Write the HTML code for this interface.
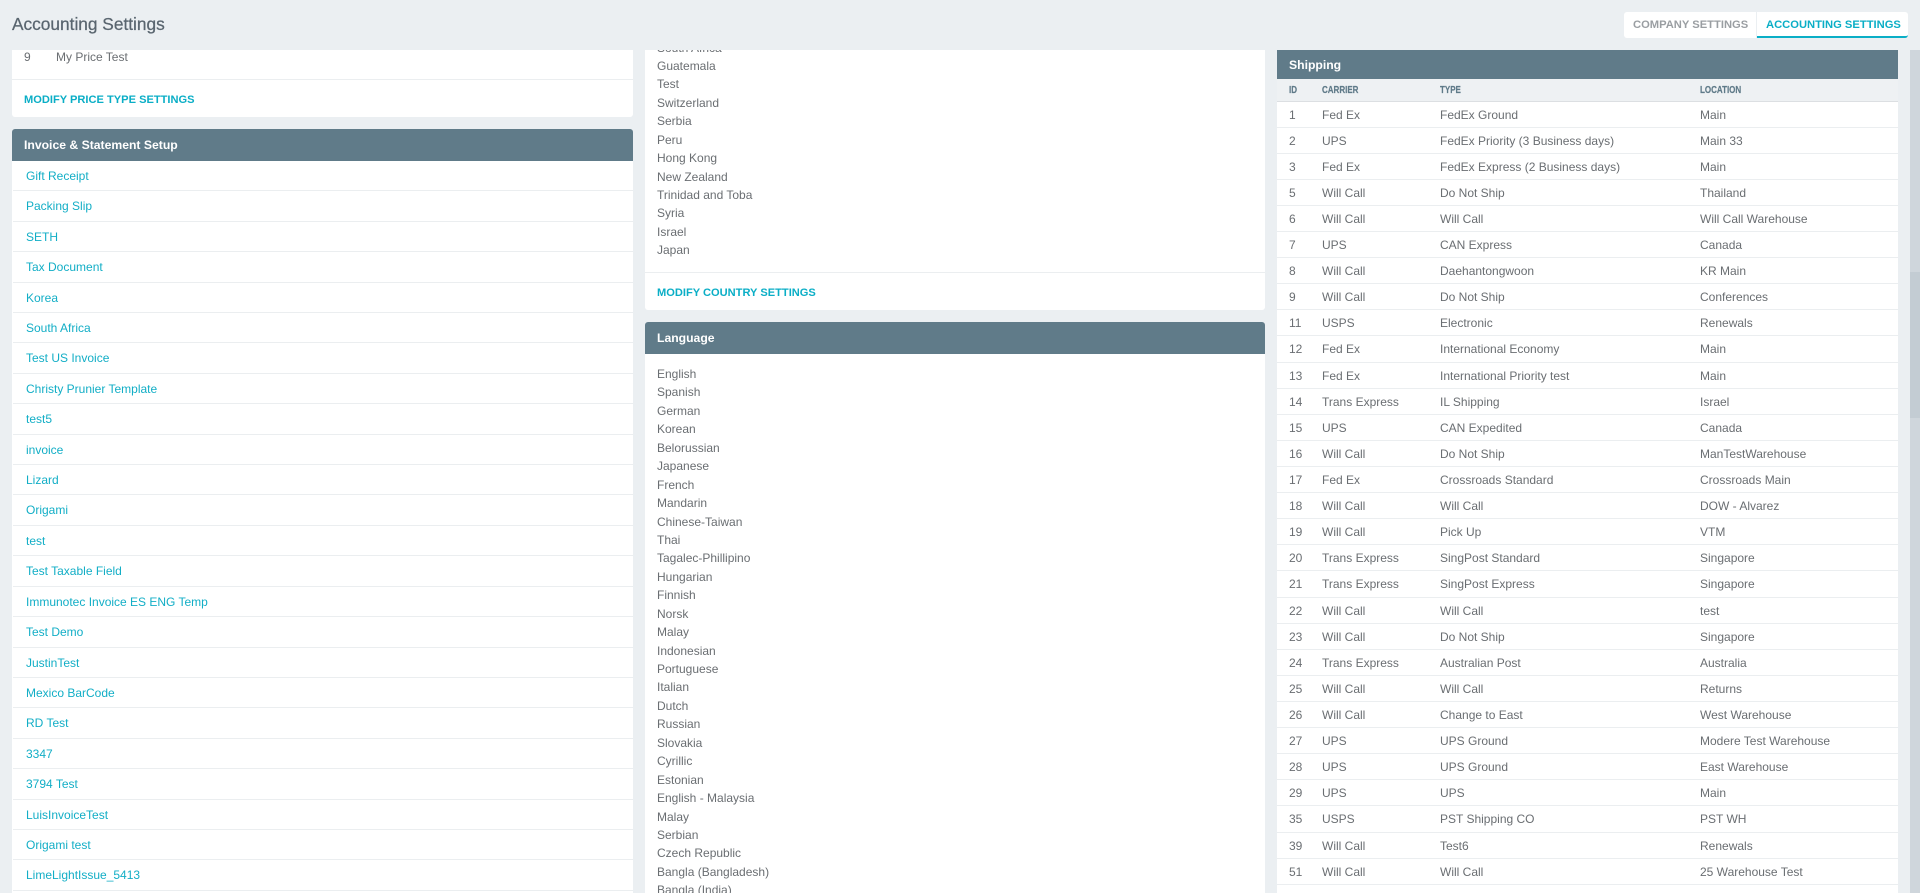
<!DOCTYPE html>
<html><head><meta charset="utf-8"><title>Accounting Settings</title>
<style>
*{box-sizing:border-box}
html,body{margin:0;padding:0;width:1920px;height:893px;overflow:hidden;background:#ebeff2;font-family:"Liberation Sans",sans-serif;font-size:12px;color:#6a6e72}
.a{position:absolute;white-space:nowrap}
#clip{position:absolute;left:0;top:0;width:1920px;height:893px;overflow:hidden;clip-path:inset(50px 0 0 0)}
.p{position:absolute;background:#fff;border-radius:3px}
.h{position:absolute;background:#607b89;color:#fff;font-weight:bold;font-size:12.2px;line-height:32px;padding-left:12px;border-radius:3px 3px 0 0}
.m{position:absolute;color:#0aaec6;font-weight:bold;font-size:11.1px;white-space:nowrap;line-height:20px}
.ln{position:absolute;height:1px;background:#ebeef0}
.l{position:absolute;left:13px;top:161px;width:620px}
.l div{height:30.42px;line-height:31.4px;border-bottom:1px solid #ebeef0;padding-left:13px;color:#12aec6;overflow:hidden}
.v{position:absolute;left:657px}
.v div{height:18.45px;line-height:18.45px;white-space:nowrap}
.t{position:absolute;left:1277px;top:101.5px;width:621px}
.t .r{height:26.12px;line-height:27px;border-bottom:1px solid #ebeef0;position:relative;background:#fff}
.r span{position:absolute;top:0;white-space:nowrap}
.r span:nth-child(1){left:12px}.r span:nth-child(2){left:45px}.r span:nth-child(3){left:163px}.r span:nth-child(4){left:423px}
.th{line-height:23px;font-size:10px;font-weight:bold;color:#5f7a88;transform:scaleX(.8);transform-origin:left center;-webkit-text-stroke:.2px #5f7a88}
</style></head><body>
<div class="a" style="left:12px;top:13px;font-size:17.3px;line-height:22px;color:#59656f;-webkit-text-stroke:.25px #59656f">Accounting Settings</div>

<div class="a" style="left:1624px;top:12px;width:132px;height:26px;background:#fff;border-radius:3px 0 0 3px;color:#9a9ea2;font-weight:bold;font-size:11.2px;line-height:26px;padding-left:9px">COMPANY SETTINGS</div>
<div class="a" style="left:1757px;top:12px;width:151px;height:26px;background:#fff;border-radius:0 3px 3px 0;border-bottom:2px solid #0aaec6;color:#0aaec6;font-weight:bold;font-size:11.2px;line-height:26px;padding-left:9px">ACCOUNTING SETTINGS</div>

<div class="a" style="left:1910px;top:50px;width:10px;height:843px;background:#cfd6dc"></div>
<div class="a" style="left:1910px;top:272px;width:10px;height:146px;background:#c3ccd3"></div>

<div id="clip">
<!-- left -->
<div class="p" style="left:12px;top:20px;width:621px;height:97px"></div>
<div class="a" style="left:24px;top:48px;line-height:18px">9</div>
<div class="a" style="left:56px;top:48px;line-height:18px">My Price Test</div>
<div class="ln" style="left:12px;top:79px;width:621px"></div>
<div class="m" style="left:24px;top:90px">MODIFY PRICE TYPE SETTINGS</div>

<div class="p" style="left:12px;top:129px;width:621px;height:764px;border-radius:3px 3px 0 0"></div>
<div class="h" style="left:12px;top:129px;width:621px">Invoice &amp; Statement Setup</div>
<div class="l">
<div>Gift Receipt</div><div>Packing Slip</div><div>SETH</div><div>Tax Document</div><div>Korea</div><div>South Africa</div><div>Test US Invoice</div><div>Christy Prunier Template</div><div>test5</div><div>invoice</div><div>Lizard</div><div>Origami</div><div>test</div><div>Test Taxable Field</div><div>Immunotec Invoice ES ENG Temp</div><div>Test Demo</div><div>JustinTest</div><div>Mexico BarCode</div><div>RD Test</div><div>3347</div><div>3794 Test</div><div>LuisInvoiceTest</div><div>Origami test</div><div>LimeLightIssue_5413</div>
</div>

<!-- middle -->
<div class="p" style="left:645px;top:0;width:620px;height:310px"></div>
<div class="v" style="top:38.5px">
<div>South Africa</div><div>Guatemala</div><div>Test</div><div>Switzerland</div><div>Serbia</div><div>Peru</div><div>Hong Kong</div><div>New Zealand</div><div>Trinidad and Toba</div><div>Syria</div><div>Israel</div><div>Japan</div>
</div>
<div class="ln" style="left:645px;top:272px;width:620px"></div>
<div class="m" style="left:657px;top:283px">MODIFY COUNTRY SETTINGS</div>

<div class="p" style="left:645px;top:322px;width:620px;height:571px;border-radius:3px 3px 0 0"></div>
<div class="h" style="left:645px;top:322px;width:620px">Language</div>
<div class="v" style="top:365px;height:528px;overflow:hidden">
<div>English</div><div>Spanish</div><div>German</div><div>Korean</div><div>Belorussian</div><div>Japanese</div><div>French</div><div>Mandarin</div><div>Chinese-Taiwan</div><div>Thai</div><div>Tagalec-Phillipino</div><div>Hungarian</div><div>Finnish</div><div>Norsk</div><div>Malay</div><div>Indonesian</div><div>Portuguese</div><div>Italian</div><div>Dutch</div><div>Russian</div><div>Slovakia</div><div>Cyrillic</div><div>Estonian</div><div>English - Malaysia</div><div>Malay</div><div>Serbian</div><div>Czech Republic</div><div>Bangla (Bangladesh)</div><div>Bangla (India)</div>
</div>

<!-- right -->
<div class="p" style="left:1277px;top:40px;width:621px;height:853px;border-radius:0"></div>
<div class="h" style="left:1277px;top:50px;width:621px;height:29px;line-height:30px;border-radius:0">Shipping</div>
<div class="a" style="left:1277px;top:79px;width:621px;height:23px;background:#eef1f3;border-bottom:1px solid #dcdfe2"></div>
<div class="a th" style="left:1289px;top:79px">ID</div>
<div class="a th" style="left:1322px;top:79px">CARRIER</div>
<div class="a th" style="left:1440px;top:79px">TYPE</div>
<div class="a th" style="left:1700px;top:79px">LOCATION</div>
<div class="t">
<div class="r"><span>1</span><span>Fed Ex</span><span>FedEx Ground</span><span>Main</span></div>
<div class="r"><span>2</span><span>UPS</span><span>FedEx Priority (3 Business days)</span><span>Main 33</span></div>
<div class="r"><span>3</span><span>Fed Ex</span><span>FedEx Express (2 Business days)</span><span>Main</span></div>
<div class="r"><span>5</span><span>Will Call</span><span>Do Not Ship</span><span>Thailand</span></div>
<div class="r"><span>6</span><span>Will Call</span><span>Will Call</span><span>Will Call Warehouse</span></div>
<div class="r"><span>7</span><span>UPS</span><span>CAN Express</span><span>Canada</span></div>
<div class="r"><span>8</span><span>Will Call</span><span>Daehantongwoon</span><span>KR Main</span></div>
<div class="r"><span>9</span><span>Will Call</span><span>Do Not Ship</span><span>Conferences</span></div>
<div class="r"><span>11</span><span>USPS</span><span>Electronic</span><span>Renewals</span></div>
<div class="r"><span>12</span><span>Fed Ex</span><span>International Economy</span><span>Main</span></div>
<div class="r"><span>13</span><span>Fed Ex</span><span>International Priority test</span><span>Main</span></div>
<div class="r"><span>14</span><span>Trans Express</span><span>IL Shipping</span><span>Israel</span></div>
<div class="r"><span>15</span><span>UPS</span><span>CAN Expedited</span><span>Canada</span></div>
<div class="r"><span>16</span><span>Will Call</span><span>Do Not Ship</span><span>ManTestWarehouse</span></div>
<div class="r"><span>17</span><span>Fed Ex</span><span>Crossroads Standard</span><span>Crossroads Main</span></div>
<div class="r"><span>18</span><span>Will Call</span><span>Will Call</span><span>DOW - Alvarez</span></div>
<div class="r"><span>19</span><span>Will Call</span><span>Pick Up</span><span>VTM</span></div>
<div class="r"><span>20</span><span>Trans Express</span><span>SingPost Standard</span><span>Singapore</span></div>
<div class="r"><span>21</span><span>Trans Express</span><span>SingPost Express</span><span>Singapore</span></div>
<div class="r"><span>22</span><span>Will Call</span><span>Will Call</span><span>test</span></div>
<div class="r"><span>23</span><span>Will Call</span><span>Do Not Ship</span><span>Singapore</span></div>
<div class="r"><span>24</span><span>Trans Express</span><span>Australian Post</span><span>Australia</span></div>
<div class="r"><span>25</span><span>Will Call</span><span>Will Call</span><span>Returns</span></div>
<div class="r"><span>26</span><span>Will Call</span><span>Change to East</span><span>West Warehouse</span></div>
<div class="r"><span>27</span><span>UPS</span><span>UPS Ground</span><span>Modere Test Warehouse</span></div>
<div class="r"><span>28</span><span>UPS</span><span>UPS Ground</span><span>East Warehouse</span></div>
<div class="r"><span>29</span><span>UPS</span><span>UPS</span><span>Main</span></div>
<div class="r"><span>35</span><span>USPS</span><span>PST Shipping CO</span><span>PST WH</span></div>
<div class="r"><span>39</span><span>Will Call</span><span>Test6</span><span>Renewals</span></div>
<div class="r"><span>51</span><span>Will Call</span><span>Will Call</span><span>25 Warehouse Test</span></div>
</div>
</div>
</body></html>
